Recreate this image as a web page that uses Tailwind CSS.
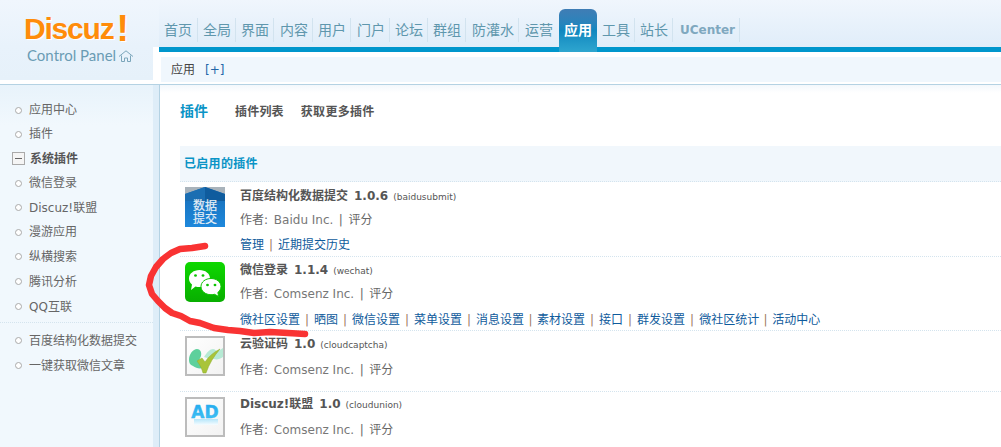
<!DOCTYPE html>
<html>
<head>
<meta charset="utf-8">
<script src="https://cdn.jsdelivr.net/npm/@tailwindcss/browser@4"></script>
</head>
<body class="relative w-[1001px] h-[447px] overflow-hidden bg-white font-['DejaVu_Sans','Noto_Sans_CJK_SC',sans-serif] text-[12px] text-[#666]">

<!-- header -->
<div class="flex h-[84px] bg-white">
  <div class="w-[159px] shrink-0">
    <div class="h-[47px] pl-[24px] pt-[13px] bg-gradient-to-b from-[#f0f6fd] to-[#e8f2fb]">
      <div class="flex items-end h-[32px] font-['Liberation_Sans',sans-serif] font-bold text-[30px] leading-[32px] tracking-[-1.200px] text-[#ff8c0a] [text-shadow:1px_1px_0_#fff]">Discuz<span class="ml-[3px] text-[37px] leading-[32px]">!</span></div>
    </div>
    <div class="flex items-start w-[153px] h-[33px] pl-[27px] bg-gradient-to-b from-[#e8f2fb] to-[#e6f1fa] font-['Lato',sans-serif] text-[15px] leading-[16px] text-[#6a9cb4]">Control Panel
      <svg class="ml-[2px] mt-[3px]" width="16" height="12" viewBox="0 0 16 12" fill="none" stroke="#7ba6bb"><path d="M1 6.500L8 .8l7 5.700M3.500 5.500v6h3V8h3v3.500h3v-6"/></svg>
    </div>
  </div>
  <div class="flex-1 flex flex-col">
    <div class="flex h-[47px] items-end text-[14px] text-[#5f97ad] bg-gradient-to-b from-[#f0f6fd] to-[#e0edf9]">
      <a class="h-[24px] mb-[5px] pl-[5px] pr-[5px] border-r border-[#d2e3ef] leading-[24px]">首页</a>
      <a class="h-[24px] mb-[5px] pl-[5px] pr-[4px] border-r border-[#d2e3ef] leading-[24px]">全局</a>
      <a class="h-[24px] mb-[5px] pl-[5px] pr-[4px] border-r border-[#d2e3ef] leading-[24px]">界面</a>
      <a class="h-[24px] mb-[5px] pl-[6px] pr-[4px] border-r border-[#d2e3ef] leading-[24px]">内容</a>
      <a class="h-[24px] mb-[5px] pl-[5px] pr-[4px] border-r border-[#d2e3ef] leading-[24px]">用户</a>
      <a class="h-[24px] mb-[5px] pl-[6px] pr-[4px] border-r border-[#d2e3ef] leading-[24px]">门户</a>
      <a class="h-[24px] mb-[5px] pl-[5px] pr-[4px] border-r border-[#d2e3ef] leading-[24px]">论坛</a>
      <a class="h-[24px] mb-[5px] pl-[5px] pr-[4px] border-r border-[#d2e3ef] leading-[24px]">群组</a>
      <a class="h-[24px] mb-[5px] pl-[6px] pr-[4px] border-r border-[#d2e3ef] leading-[24px]">防灌水</a>
      <a class="h-[24px] mb-[5px] pl-[6px] pr-[4px] leading-[24px]">运营</a>
      <a class="relative h-[43px] w-[38px] ml-[2px] mb-[-5px] rounded-t-[6px] bg-gradient-to-b from-[#3f7db5] via-[#0f87bf] to-[#2ea6cf] text-center font-bold text-white leading-[43px]">应用</a>
      <a class="h-[24px] mb-[5px] pl-[5px] pr-[4px] border-r border-[#d2e3ef] leading-[24px]">工具</a>
      <a class="h-[24px] mb-[5px] pl-[5px] pr-[4px] border-r border-[#d2e3ef] leading-[24px]">站长</a>
      <a class="h-[24px] mb-[5px] pl-[7px] pr-[4px] border-r border-[#d2e3ef] text-[12px] font-bold text-[#7fa8bf] leading-[24px]">UCenter</a>
    </div>
    <div class="h-[5px] bg-[#0096cc]"></div>
    <div class="h-[5px] bg-white"></div>
    <div class="h-[25px] ml-[2px] pl-[10px] bg-[#f0f7fd] flex items-center text-[#444]">应用<span class="ml-[10px] text-[#2366a8]">[+]</span></div>
    <div class="h-[2px] bg-white"></div>
  </div>
</div>

<div class="flex h-[363px] border-t border-[#b4d2e3]">
  <!-- sidebar -->
  <div class="w-[153px] shrink-0 h-full bg-gradient-to-b from-[#e8f3fb] to-[#f1f8fd] to-[40px] pt-[13px]">
    <div class="flex items-center h-[24px] pl-[15px]"><span class="w-[7px] h-[7px] rounded-full border border-[#aaa] bg-white mr-[7px]"></span>应用中心</div>
    <div class="flex items-center h-[24px] pl-[15px]"><span class="w-[7px] h-[7px] rounded-full border border-[#aaa] bg-white mr-[7px]"></span>插件</div>
    <div class="flex items-center h-[25px] pl-[12px] font-bold text-[#555]"><span class="flex items-center justify-center w-[13px] h-[13px] border border-[#aaa] mr-[5px] bg-[#f5f5f5]"><span class="w-[7px] h-[1px] bg-[#666]"></span></span>系统插件</div>
    <div class="flex items-center h-[24px] pl-[15px]"><span class="w-[7px] h-[7px] rounded-full border border-[#aaa] bg-white mr-[7px]"></span>微信登录</div>
    <div class="flex items-center h-[25px] pl-[15px]"><span class="w-[7px] h-[7px] rounded-full border border-[#aaa] bg-white mr-[7px]"></span>Discuz!联盟</div>
    <div class="flex items-center h-[24px] pl-[15px]"><span class="w-[7px] h-[7px] rounded-full border border-[#aaa] bg-white mr-[7px]"></span>漫游应用</div>
    <div class="flex items-center h-[25px] pl-[15px]"><span class="w-[7px] h-[7px] rounded-full border border-[#aaa] bg-white mr-[7px]"></span>纵横搜索</div>
    <div class="flex items-center h-[25px] pl-[15px]"><span class="w-[7px] h-[7px] rounded-full border border-[#aaa] bg-white mr-[7px]"></span>腾讯分析</div>
    <div class="flex items-center h-[25px] pl-[15px]"><span class="w-[7px] h-[7px] rounded-full border border-[#aaa] bg-white mr-[7px]"></span>QQ互联</div>
    <div class="border-t border-dotted border-[#d4e4ee] mt-[3px] pt-[5px]">
      <div class="flex items-center h-[25px] pl-[15px]"><span class="w-[7px] h-[7px] rounded-full border border-[#aaa] bg-white mr-[7px]"></span>百度结构化数据提交</div>
      <div class="flex items-center h-[25px] pl-[15px]"><span class="w-[7px] h-[7px] rounded-full border border-[#aaa] bg-white mr-[7px]"></span>一键获取微信文章</div>
    </div>
  </div>
  <div class="w-[7px] shrink-0 h-full bg-[#deedf8] border-r border-[#b4d2e3]"></div>

  <!-- main -->
  <div class="flex-1 pl-[20px] bg-gradient-to-b from-[#f3f8fc] to-white to-[8px]">
    <div class="flex items-center h-[53px] font-bold text-[#555]">
      <span class="w-[55px] text-[14px] text-[#0a94c6]">插件</span>
      <span class="mr-[17px] tracking-[0.200px]">插件列表</span>
      <span class="tracking-[0.300px]">获取更多插件</span>
    </div>
    <div class="h-[36px] mt-[8px] pl-[4px] flex items-center bg-[#f1f7fc] border-b border-dotted border-[#d4e4ee] font-bold tracking-[0.300px] text-[#0a94c6]">已启用的插件</div>

    <div class="flex h-[75px] pl-[5px] pt-[5px] border-b border-dotted border-[#d4e4ee]">
      <svg class="shrink-0" width="40" height="40" viewBox="0 0 40 40"><defs><linearGradient id="bd" x1="0" y1="0" x2="0" y2="1"><stop offset="0" stop-color="#176cb4"/><stop offset="1" stop-color="#1e88dc"/></linearGradient></defs><rect width="40" height="40" fill="url(#bd)"/><path d="M0 0h20L0 7zM40 0H20l20 7z" fill="#a9b3bb"/><path d="M0 7L20 0v14H0z" fill="#1b6eb2"/><path d="M40 7L20 0v14h20z" fill="#0f5c9e"/><text x="20" y="23" text-anchor="middle" font-size="12" fill="#e6eff6" stroke="#e6eff6" stroke-width=".2">数据</text><text x="20" y="36" text-anchor="middle" font-size="12" fill="#e6eff6" stroke="#e6eff6" stroke-width=".2">提交</text></svg>
      <div class="ml-[15px]">
        <div class="h-[18px] leading-[18px] font-bold text-[#555]">百度结构化数据提交<span class="ml-[6px]">1.0.6</span><span class="ml-[5px] text-[9px] font-normal">(baidusubmit)</span></div>
        <div class="h-[24px] mt-[3px] leading-[24px]">作者: <span class="ml-[2px] text-[#777]">Baidu Inc.</span><span class="inline-block w-[15px] text-center">|</span>评分</div>
        <div class="mt-[4px] leading-[18px] text-[#0f5b9c]">管理<span class="inline-block w-[14px] text-center text-[#a07a60]">|</span>近期提交历史</div>
      </div>
    </div>

    <div class="flex h-[74px] pl-[5px] pt-[5px] border-b border-dotted border-[#d4e4ee]">
      <svg class="shrink-0" width="40" height="40" viewBox="0 0 40 40"><defs><linearGradient id="wx" x1="0" y1="0" x2="0" y2="1"><stop offset="0" stop-color="#0ed800"/><stop offset="1" stop-color="#08ae00"/></linearGradient></defs><rect width="40" height="40" rx="5" fill="url(#wx)"/><path d="M4 16.500C4 11.500 8.700 8 14.500 8S25 11.500 25 16.500 20.300 25 14.500 25c-1.500 0-2.800-.2-4-.6L6 28l1-5.500C5 20.900 4 18.800 4 16.500z" fill="#fff"/><ellipse cx="10.500" cy="13.500" rx="1.400" ry="1.300" fill="#0cc400"/><ellipse cx="18" cy="13.500" rx="1.400" ry="1.300" fill="#0cc400"/><path d="M16 24.500c0-4.500 4.300-8 10-8s10 3.500 10 8c0 2.400-1.200 4.500-3.200 6l1 4-4.300-2.200c-1.100.3-2.300.4-3.500.4-5.700 0-10-3.600-10-8.200z" fill="#fff" stroke="#0cc400"/><ellipse cx="22.500" cy="23" rx="1.400" ry="1.300" fill="#0cc400"/><ellipse cx="30" cy="23" rx="1.400" ry="1.300" fill="#0cc400"/></svg>
      <div class="ml-[15px] mt-[-1px]">
        <div class="h-[18px] leading-[18px] font-bold text-[#555]">微信登录<span class="ml-[6px]">1.1.4</span><span class="ml-[5px] text-[9px] font-normal">(wechat)</span></div>
        <div class="h-[24px] mt-[3px] leading-[24px]">作者: <span class="ml-[2px] text-[#777]">Comsenz Inc.</span><span class="inline-block w-[15px] text-center">|</span>评分</div>
        <div class="mt-[5px] leading-[18px] text-[#0f5b9c] whitespace-nowrap">微社区设置<span class="inline-block w-[14px] text-center text-[#a07a60]">|</span>晒图<span class="inline-block w-[14px] text-center text-[#a07a60]">|</span>微信设置<span class="inline-block w-[14px] text-center text-[#a07a60]">|</span>菜单设置<span class="inline-block w-[14px] text-center text-[#a07a60]">|</span>消息设置<span class="inline-block w-[13px] text-center text-[#a07a60]">|</span>素材设置<span class="inline-block w-[14px] text-center text-[#a07a60]">|</span>接口<span class="inline-block w-[14px] text-center text-[#a07a60]">|</span>群发设置<span class="inline-block w-[14px] text-center text-[#a07a60]">|</span>微社区统计<span class="inline-block w-[13px] text-center text-[#a07a60]">|</span>活动中心</div>
      </div>
    </div>

    <div class="flex h-[61px] pl-[5px] pt-[5px] border-b border-dotted border-[#d4e4ee]">
      <svg class="shrink-0" width="40" height="40" viewBox="0 0 40 40"><defs><linearGradient id="bx" x1="0" y1="0" x2="1" y2="1"><stop offset="0" stop-color="#fff"/><stop offset="1" stop-color="#f2f2f2"/></linearGradient></defs><rect x="1" y="1" width="38" height="38" fill="url(#bx)" stroke="#bcbcbc" stroke-width="2"/><path d="M4 24c0-6 4-11 8-11 3 0 5 3 4 7-1 3-3 5-1 8 1 2 2 3 3 4-4 1-7 0-10-2-3-1-4-3-4-6z" fill="#5dd09c"/><path d="M19 21c3-5 6-8 9-8 2 0 3 2 4 2 2 0 4-2 6-3v9c-3 2-6 3-9 2-3 0-7-1-10-2z" fill="#b6ead4"/><path d="M12 25l5-3 3 4c4-6 9-10 15-13-6 7-11 15-14 24h-3c-1-4-3-8-6-12z" fill="#a9c43a" stroke="#8fae2c" stroke-width=".5"/></svg>
      <div class="ml-[15px] mt-[-1px]">
        <div class="h-[18px] leading-[18px] font-bold text-[#555]">云验证码<span class="ml-[6px]">1.0</span><span class="ml-[5px] text-[9px] font-normal">(cloudcaptcha)</span></div>
        <div class="h-[24px] mt-[5px] leading-[24px]">作者: <span class="ml-[2px] text-[#777]">Comsenz Inc.</span><span class="inline-block w-[15px] text-center">|</span>评分</div>
      </div>
    </div>

    <div class="flex h-[55px] pl-[5px] pt-[5px]">
      <svg class="shrink-0" width="40" height="40" viewBox="0 0 40 40"><defs><linearGradient id="ad" x1="0" y1="0" x2="0" y2="1"><stop offset="0" stop-color="#1fa8ee"/><stop offset="1" stop-color="#46c4f4"/></linearGradient><linearGradient id="adr" x1="0" y1="0" x2="0" y2="1"><stop offset="0" stop-color="#b5e6fa"/><stop offset="1" stop-color="#f6fcff"/></linearGradient></defs><rect x="1" y="1" width="38" height="38" fill="url(#bx)" stroke="#bcbcbc" stroke-width="2"/><text x="20" y="21" text-anchor="middle" font-family="DejaVu Sans" font-size="17" font-weight="bold" fill="url(#ad)" stroke="#2fb2f0" stroke-width=".4">AD</text><rect x="9" y="22" width="24" height="6" fill="url(#adr)"/></svg>
      <div class="ml-[15px] mt-[-2px]">
        <div class="h-[18px] leading-[18px] font-bold text-[#555]">Discuz!联盟<span class="ml-[6px]">1.0</span><span class="ml-[5px] text-[9px] font-normal">(cloudunion)</span></div>
        <div class="h-[24px] mt-[5px] leading-[24px]">作者: <span class="ml-[2px] text-[#777]">Comsenz Inc.</span><span class="inline-block w-[15px] text-center">|</span>评分</div>
      </div>
    </div>
  </div>
</div>

<!-- hand drawn red mark over the page -->
<svg class="absolute left-0 top-0 pointer-events-none" width="1001" height="447" fill="none"><path d="M205 246L192 248 180 249 171 253 163 259 156 267 151 276 149 285 152 294 158 301 165 308 172 313 181 316 190 321 200 323 214 328 228 330 240 331 254 333 270 332 288 333 305 334" stroke="#f93333" stroke-width="6.500" stroke-linecap="round" stroke-linejoin="round"/></svg>
</body>
</html>
